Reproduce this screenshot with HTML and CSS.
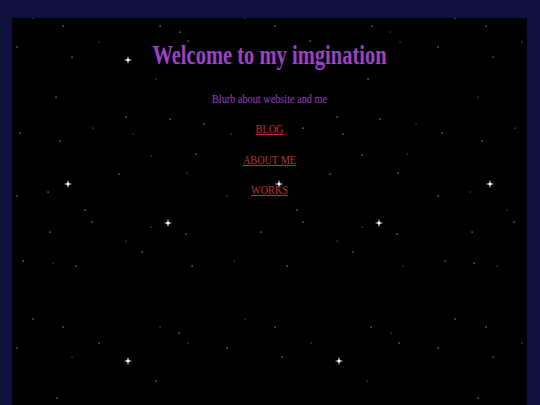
FILE: index.html
```html
<!DOCTYPE html>
<html lang="en">
<head>
  <meta charset="UTF-8" />
  <meta name="viewport" content="width=device-width, initial-scale=1" />
  <title>My Imagination</title>
  <link rel="stylesheet" href="styles.css">
</head>
<body>
  <div class="sky">
    <!-- star field -->
    <svg class="stars" width="515" height="387" viewBox="12 18 515 387" aria-hidden="true">
      <defs>
        <g id="sparkle">
          <rect x="-4" y="-0.5" width="8" height="1" fill="#fff" opacity="0.35" />
          <rect x="-0.5" y="-4" width="1" height="8" fill="#fff" opacity="0.35" />
          <rect x="-2.5" y="-0.6" width="5" height="1.2" fill="#fff" opacity="0.8" />
          <rect x="-0.6" y="-2.5" width="1.2" height="5" fill="#fff" opacity="0.8" />
          <rect x="-1.2" y="-1.2" width="2.4" height="2.4" fill="#fff" />
        </g>
      </defs>
      <g id="dots" fill="#bdbdbd"></g>
      <g id="sparkles"></g>
    </svg>

    <div class="content">
      <h1>Welcome to my imgination</h1>
      <p class="blurb">Blurb about website and me</p>
      <a href="#">BLOG</a>
      <a href="#">ABOUT ME</a>
      <a href="#">WORKS</a>
    </div>
  </div>

  <script>
    const dots = [
      [33,18],[63,26],[160,26],[99,42],[17,47],[72,57],[156,79],[56,97],[126,117],[93,128],[20,133],[60,141],[133,134],[170,119],[204,124],[231,134],[180,32],[188,41],[245,18],
      [275,26],[372,26],[390,32],[455,18],[486,26],[400,42],[438,47],[493,57],[522,42],[310,41],[368,79],[478,97],[337,117],[380,119],[416,124],[303,128],[442,133],[515,128],[482,141],[343,134],
      [151,156],[196,154],[119,174],[187,173],[48,192],[17,196],[227,196],[85,210],[92,222],[151,227],[50,232],[186,234],[126,241],[142,252],[23,261],[53,263],[76,266],[192,266],[234,261],[261,232],
      [362,155],[407,154],[330,174],[398,173],[470,192],[438,196],[297,210],[507,210],[303,222],[514,222],[362,227],[472,232],[397,234],[337,241],[353,252],[287,266],[403,266],[445,261],[474,263],[497,266],
      [33,319],[63,327],[160,327],[179,333],[99,343],[188,343],[17,348],[227,348],[72,357],[156,381],[57,398],[245,319],
      [275,327],[371,327],[391,333],[455,319],[486,327],[311,343],[399,343],[438,348],[522,343],[282,357],[493,357],[367,381],[478,398]
    ];
    const sparkles = [[128,60],[68,184],[168,223],[279,184],[379,223],[490,184],[128,361],[339,361]];

    const ns = 'http://www.w3.org/2000/svg';
    const dotGroup = document.getElementById('dots');
    dots.forEach(([x, y], i) => {
      const r = document.createElementNS(ns, 'rect');
      r.setAttribute('x', x - 0.5);
      r.setAttribute('y', y - 0.5);
      r.setAttribute('width', 1.2);
      r.setAttribute('height', 1.2);
      r.setAttribute('opacity', i % 3 === 0 ? 0.5 : 0.85);
      dotGroup.appendChild(r);
    });

    const sparkleGroup = document.getElementById('sparkles');
    sparkles.forEach(([x, y]) => {
      const u = document.createElementNS(ns, 'use');
      u.setAttribute('href', '#sparkle');
      u.setAttribute('x', x);
      u.setAttribute('y', y);
      sparkleGroup.appendChild(u);
    });
  </script>
</body>
</html>
```

FILE: styles.css
```css
html,
body {
  height: 100%;
}
body {
  margin: 0;
  padding: 18px 13px 0 12px;
  box-sizing: border-box;
  background: #10103e;
  font-family: "Liberation Serif", "Times New Roman", serif;
  overflow: hidden;
}
.sky {
  position: relative;
  height: 100%;
  background: #000;
}
.stars {
  position: absolute;
  top: 0;
  left: 0;
}

/* the text is set narrow, like a squeezed Times */
.content {
  position: relative;
  display: flex;
  flex-direction: column;
  align-items: center;
  padding-top: 22px;
  transform: scaleX(0.76);
  transform-origin: center top;
}
h1 {
  margin: 0;
  font-size: 27px;
  line-height: 30px;
  font-weight: bold;
  color: #9a42c8;
}
.blurb {
  margin: 20.5px 0 0;
  font-size: 13.5px;
  line-height: 16px;
  color: #9a40c2;
}
.content a {
  margin-top: 14.5px;
  font-size: 13.5px;
  line-height: 16px;
  color: #bf3030;
}
```
